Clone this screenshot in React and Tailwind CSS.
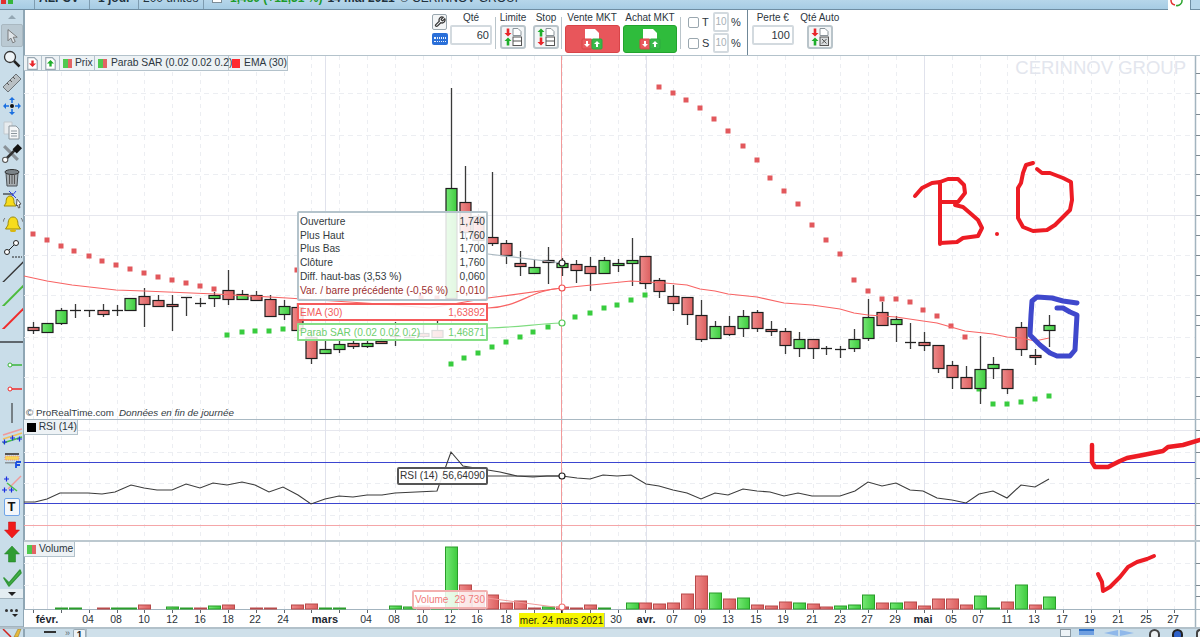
import React from "react";

const STEP = 13.92;
const xOf = (i) => 33 + STEP * i;
const px = (i) => Math.round(xOf(i)) + 0.5;

// i, open top, body bottom, high, low, up?
const candles = [
  [0, 327, 330, 322, 334, 0], [1, 323, 332, 323, 332, 1], [2, 310, 323, 308, 325, 1],
  [3, 310, 310, 304, 318, 2], [4, 310, 310, 310, 317, 2], [5, 310, 314, 304, 317, 0],
  [6, 310, 310, 305, 316, 2], [7, 298, 310, 298, 310, 1], [8, 296, 304, 288, 327, 0],
  [9, 300, 306, 295, 306, 0], [10, 304, 306, 295, 331, 0], [11, 297, 297, 297, 316, 2],
  [12, 303, 303, 298, 307, 2], [13, 295, 298, 292, 307, 1], [14, 290, 299, 270, 305, 0],
  [15, 294, 299, 290, 299, 1], [16, 295, 300, 291, 300, 0], [17, 299, 316, 295, 317, 0],
  [18, 306, 314, 300, 320, 1], [19, 307, 330, 303, 331, 0], [20, 337, 358, 330, 364, 0],
  [21, 349, 353, 341, 353, 1], [22, 344, 349, 341, 353, 1], [23, 343, 346, 339, 349, 0],
  [24, 343, 346, 340, 348, 1], [25, 341, 343, 338, 343, 0], [26, 336, 336, 322, 346, 2],
  [27, 337, 337, 330, 338, 2], [28, 333, 336, 325, 338, 0], [29, 330, 337, 320, 338, 0],
  [30, 188, 298, 88, 300, 1], [31, 202, 232, 166, 238, 0], [32, 216, 240, 214, 244, 0],
  [33, 237, 243, 172, 246, 0], [34, 243, 255, 240, 264, 0], [35, 263, 266, 251, 276, 0],
  [36, 267, 273, 260, 273, 1], [37, 260, 262, 247, 284, 0], [38, 263, 267, 258, 276, 1],
  [39, 264, 270, 260, 283, 0], [40, 266, 273, 257, 291, 0], [41, 260, 273, 257, 273, 1],
  [42, 263, 265, 259, 272, 1], [43, 260, 263, 238, 286, 1], [44, 256, 283, 256, 289, 0],
  [45, 280, 291, 278, 298, 0], [46, 296, 303, 285, 311, 0], [47, 297, 314, 297, 325, 0],
  [48, 315, 339, 300, 342, 0], [49, 326, 338, 321, 338, 1], [50, 326, 334, 316, 336, 0],
  [51, 316, 328, 310, 337, 1], [52, 312, 328, 310, 332, 0], [53, 329, 331, 321, 336, 0],
  [54, 331, 345, 328, 354, 0], [55, 339, 348, 332, 357, 1], [56, 339, 348, 339, 359, 0],
  [57, 348, 348, 346, 355, 2], [58, 349, 349, 346, 358, 2], [59, 339, 348, 329, 352, 1],
  [60, 317, 338, 299, 341, 1], [61, 312, 325, 302, 325, 0], [62, 319, 324, 316, 342, 1],
  [63, 342, 342, 323, 349, 2], [64, 342, 345, 332, 351, 0], [65, 345, 368, 345, 373, 0],
  [66, 365, 377, 361, 389, 0], [67, 377, 388, 366, 388, 0], [68, 369, 388, 336, 404, 1],
  [69, 364, 368, 357, 379, 1], [70, 369, 388, 369, 394, 0], [71, 327, 349, 322, 356, 0],
  [72, 355, 357, 349, 365, 0], [73, 325, 330, 315, 347, 1],
];

// i, height, up?
const volumes = [
  [2, 1, 1], [3, 1, 1], [5, 1, 0], [6, 1, 1], [7, 1, 1], [8, 4, 0], [10, 2, 1], [11, 1, 1],
  [12, 1, 0], [13, 3, 1], [14, 4, 0], [16, 1, 0], [17, 1, 0], [19, 4, 0], [20, 5, 0],
  [21, 1, 1], [22, 1, 1], [26, 3, 1], [27, 2, 1], [28, 3, 0], [29, 1, 1], [30, 62, 1],
  [31, 24, 0], [32, 18, 0], [33, 14, 0], [34, 6, 0], [35, 8, 0], [36, 1, 0], [37, 2, 1],
  [38, 2, 0], [39, 1, 0], [40, 4, 0], [41, 1, 1], [43, 6, 1], [44, 6, 0], [45, 5, 0],
  [46, 6, 0], [47, 15, 0], [48, 33, 0], [49, 16, 1], [50, 10, 0], [51, 11, 1], [52, 4, 0],
  [53, 3, 0], [54, 7, 0], [55, 6, 1], [56, 5, 0], [57, 2, 0], [58, 3, 1], [59, 4, 1],
  [60, 14, 1], [61, 6, 0], [62, 6, 1], [63, 7, 0], [64, 3, 0], [65, 10, 0], [66, 10, 0],
  [67, 4, 0], [68, 13, 1], [69, 1, 1], [70, 7, 0], [71, 24, 1], [72, 4, 0], [73, 12, 1],
];

const sarRed = [
  [33, 234], [47, 240], [61, 246], [74, 251], [89, 256], [102, 261], [116, 265], [130, 269],
  [144, 273], [158, 277], [172, 280], [186, 283], [200, 286], [214, 289], [297, 270],
  [421, 298], [437, 298], [659, 87], [673, 93], [686, 100], [700, 108], [714, 119], [728, 131],
  [743, 146], [757, 160], [770, 178], [784, 191], [798, 204], [812, 225], [826, 240],
  [840, 254], [854, 280], [868, 291], [882, 299], [896, 299], [910, 302], [923, 310],
  [937, 316], [951, 326], [965, 337],
];
const sarGreen = [
  [227, 335], [242, 332], [255, 331], [269, 331], [283, 329], [451, 364], [464, 358],
  [478, 353], [492, 347], [506, 342], [520, 337], [533, 332], [548, 327], [575, 317],
  [590, 313], [604, 308], [617, 305], [631, 300], [645, 295], [979, 389], [993, 404],
  [1007, 404], [1021, 402], [1035, 399], [1049, 396],
];

const ema =
  "24,276 47,281 72,285 116,290 144,291 215,294 287,298 380,304 430,308 488,298 562,288 631,281 665,283 687,285 700,289 715,291 728,294 757,297 784,303 812,305 840,309 854,313 868,315 896,317 923,321 937,323 965,331 993,334 1007,337 1021,338 1035,341 1049,338";
const rsi =
  "24,502 35,502 47,499 60,493 88,493 102,494 115,492 131,485 144,488 157,490 172,490 186,484 200,488 213,483 227,485 242,482 255,485 269,492 283,487 298,495 311,504 325,499 339,496 353,497 367,495 382,495 395,493 437,491 451,452 463,466 500,472 517,476 533,477 547,476 562,476 577,478 590,479 603,475 617,476 631,475 646,484 659,486 673,490 687,493 701,499 715,493 728,495 743,489 757,491 770,492 784,496 798,493 812,496 840,496 855,491 868,482 882,486 896,483 910,490 923,491 937,498 952,500 966,503 979,494 993,491 1007,498 1021,485 1035,487 1049,479";

const axisLabels = [
  ["04", 88], ["08", 116], ["10", 144], ["12", 172], ["16", 200], ["18", 228], ["22", 255], ["24", 283],
  ["04", 366], ["08", 394], ["10", 422], ["12", 450], ["16", 477], ["18", 506], ["30", 616],
  ["07", 672], ["09", 700], ["13", 728], ["15", 756], ["19", 783], ["21", 812], ["23", 840],
  ["27", 867], ["29", 895], ["05", 951], ["07", 978], ["11", 1007], ["13", 1034], ["17", 1062],
  ["19", 1090], ["21", 1118], ["25", 1146], ["27", 1173],
];
const monthLabels = [["févr.", 47], ["mars", 325], ["avr.", 646], ["mai", 923]];
const monthLines = [47, 325, 646, 924];
const gridX = Array.from({ length: 42 }, (_, k) => Math.round(33 + STEP * 2 * k) + 0.5);

const Defs = () => (
  <defs>
    <linearGradient id="barRed" x1="0" x2="1" y1="0" y2="0">
      <stop offset="0" stopColor="#ee8a8a" />
      <stop offset="1" stopColor="#dc5f5f" />
    </linearGradient>
    <linearGradient id="barGreen" x1="0" x2="1" y1="0" y2="0">
      <stop offset="0" stopColor="#74e874" />
      <stop offset="1" stopColor="#3ecb3e" />
    </linearGradient>
  </defs>
);

// every pane uses page coordinates in its viewBox
const PaneSvg = ({ top, height, children }) => (
  <svg
    className="block overflow-visible"
    width="1176"
    height={height}
    viewBox={`24 ${top} 1176 ${height}`}
  >
    <Defs />
    {children}
  </svg>
);

const Grid = ({ top, bottom, rows, solid = [], ticks = [] }) => (
  <g>
    {gridX.map((x) => (
      <line key={x} x1={x} x2={x} y1={top} y2={bottom} stroke="#eceef2" strokeDasharray="4 4" />
    ))}
    {rows.map((y) => (
      <line key={y} x1="24" x2="1195" y1={y + 0.5} y2={y + 0.5} stroke="#eceef2" strokeDasharray="5 4" />
    ))}
    {solid.map((y) => (
      <line key={y} x1="24" x2="1195" y1={y + 0.5} y2={y + 0.5} stroke="#e6e7ee" />
    ))}
    {monthLines.map((x) => (
      <line key={x} x1={x + 0.5} x2={x + 0.5} y1={top} y2={bottom} stroke="#e0e2ec" />
    ))}
    <line x1="1195.5" x2="1195.5" y1={top} y2={bottom} stroke="#a3b4bf" strokeWidth="1.5" />
    {ticks.map((y) => (
      <line key={y} x1="1196" x2="1200" y1={y + 0.5} y2={y + 0.5} stroke="#7f8a92" />
    ))}
  </g>
);

const Crosshair = ({ top, bottom }) => (
  <line x1="561.5" x2="561.5" y1={top} y2={bottom} stroke="#f29a9a" />
);

const Candle = ({ c }) => {
  const [i, t, b, hi, lo, kind] = c;
  const x = px(i);
  return (
    <g>
      <line x1={x} x2={x} y1={hi} y2={lo} stroke="#3a3a3a" strokeWidth="1.3" />
      {kind === 2 ? (
        <line x1={x - 5.5} x2={x + 5.5} y1={t + 0.5} y2={t + 0.5} stroke="#222" strokeWidth="1.3" />
      ) : (
        <rect
          x={x - 5.5}
          y={t + 0.5}
          width="11"
          height={b - t}
          fill={kind === 1 ? "url(#barGreen)" : "url(#barRed)"}
          stroke="#1d1d1d"
          strokeWidth="1.2"
        />
      )}
    </g>
  );
};

const Scribble = ({ d, color, width = 3.5 }) => (
  <path d={d} fill="none" stroke={color} strokeWidth={width} strokeLinecap="round" strokeLinejoin="round" />
);

const TwoTone = () => (
  <span className="flex h-[9px] w-[9px] shrink-0">
    <span className="w-1/2 bg-[#4fc94f]" />
    <span className="w-1/2 bg-[#e26464]" />
  </span>
);

const PricePane = () => (
  <div className="relative h-[364px] border-t border-[#b3c2cb]">
    <PaneSvg top={56} height={363}>
      <Grid
        top={56}
        bottom={419}
        rows={[93, 135, 174, 255, 295, 337, 377]}
        solid={[215]}
        ticks={[73, 93, 114, 135, 155, 174, 195, 215, 235, 255, 275, 295, 315, 325, 357, 377, 396]}
      />
      <Crosshair top={56} bottom={419} />
      {sarRed.map(([x, y]) => (
        <rect key={x} x={x - 2.5} y={y - 2.5} width="5" height="5" fill="#e2585c" />
      ))}
      {sarGreen.map(([x, y]) => (
        <rect key={x} x={x - 2.5} y={y - 2.5} width="5" height="5" fill="#38cc3e" />
      ))}
      {candles.map((c) => (
        <Candle key={c[0]} c={c} />
      ))}
      <polyline points={ema} fill="none" stroke="#f86464" strokeWidth="1.2" />
      <path d="M488 254 L562 263" fill="none" stroke="#aab8c0" strokeWidth="1.2" />
      <path d="M488 308 C520 307 530 290 562 288" fill="none" stroke="#f86464" strokeWidth="1.2" />
      <path d="M488 328 C520 327 535 324 562 323" fill="none" stroke="#7fdc80" strokeWidth="1.2" />
      <circle cx="562" cy="263" r="3" fill="#fff" stroke="#222" strokeWidth="1.2" />
      <circle cx="562" cy="288" r="3" fill="#fff" stroke="#f05050" strokeWidth="1.2" />
      <circle cx="562" cy="323" r="3" fill="#fff" stroke="#55c855" strokeWidth="1.2" />
      {/* B.O hand written */}
      <Scribble
        color="#ed1c24"
        width={4}
        d="M915 196 L922 188 L932 183 L940 182 L948 179 L958 179 L964 185 L965 193 L958 202 L942 202 M955 205 L963 207 L970 213 L978 220 L982 228 L978 236 L963 238 L957 242 L940 243 M940 182 L940 244"
      />
      <circle cx="997" cy="234" r="2" fill="#ed1c24" />
      <Scribble
        color="#ed1c24"
        width={4}
        d="M1033 163 L1026 165 L1023 173 L1021 183 L1018 188 L1018 218 L1023 227 L1033 231 L1047 230 L1055 225 L1062 218 L1070 210 L1072 200 L1071 182 L1063 178 L1050 173 L1042 173 L1037 169"
      />
      <Scribble
        color="#3f48cc"
        width={5}
        d="M1077 303 L1063 301 L1052 298 L1037 297 L1032 301 L1031 315 L1030 335 L1040 345 L1050 353 L1057 356 L1070 356 L1075 350 L1077 315 L1070 312 L1063 308 L1057 308"
      />
    </PaneSvg>

    <div className="absolute left-0 top-0 flex h-[15px] items-center whitespace-nowrap border-b border-r border-[#b3c2cb] bg-[#edf2f5] text-[10.300px] leading-none text-[#2c3640]">
      <span className="flex h-full w-[18px] items-center justify-center border-r border-[#b3c2cb]">
        <svg width="13" height="13" viewBox="0 0 11 11">
          <path d="M1.500 .5h5.500l2.500 2.500v7.500h-8z" fill="#fff" stroke="#9aa8b2" />
          <path d="M5.500 8.500l-3-3h2v-2.500h2v2.500h2z" fill="#e8262a" />
        </svg>
      </span>
      <span className="flex h-full w-[18px] items-center justify-center border-r border-[#b3c2cb]">
        <svg width="13" height="13" viewBox="0 0 11 11">
          <path d="M1.500 .5h5.500l2.500 2.500v7.500h-8z" fill="#fff" stroke="#9aa8b2" />
          <path d="M5.500 2.500l3 3h-2v2.500h-2v-2.500h-2z" fill="#1fae2b" />
        </svg>
      </span>
      <span className="flex h-full w-[35px] items-center gap-[3px] border-r border-[#b3c2cb] pl-[3px]">
        <TwoTone />
        Prix
      </span>
      <span className="flex h-full w-[134px] items-center gap-[4px] border-r border-[#b3c2cb] pl-[3px]">
        <TwoTone />
        Parab SAR (0.02 0.02 0.2)
      </span>
      <span className="flex h-full w-[58px] items-center gap-[4px] pl-[3px]">
        <span className="h-[9px] w-[9px] bg-[#ff2a2f]" />
        EMA (30)
      </span>
    </div>

    <div className="absolute right-[14px] top-0 text-[18.500px] leading-6 text-[#e3e6ee]">CERINNOV GROUP</div>

    <div className="absolute bottom-0 left-[2px] flex gap-[5px] whitespace-nowrap text-[9.800px] leading-[13px] text-[#333c44]">
      <span>© ProRealTime.com</span>
      <span className="italic">Données en fin de journée</span>
    </div>

    <div className="absolute left-[273px] top-[155px] w-[191px] whitespace-nowrap">
      <div className="rounded-[2px] border-2 border-[#b4c3cb] bg-white/85 px-[1px] py-[2px] text-[10.200px] leading-[13.700px] text-[#333a40]">
        {[
          ["Ouverture", "1,740"],
          ["Plus Haut", "1,760"],
          ["Plus Bas", "1,700"],
          ["Clôture", "1,760"],
          ["Diff. haut-bas (3,53 %)", "0,060"],
        ].map(([a, b]) => (
          <div key={a} className="flex justify-between">
            <span>{a}</span>
            <span>{b}</span>
          </div>
        ))}
        <div className="flex justify-between text-[#9c2f2f]">
          <span>Var. / barre précédente (-0,56 %)</span>
          <span>-0,010</span>
        </div>
      </div>
      <div className="mt-[2px] flex h-[18px] items-center justify-between border-2 border-[#f55a5a] bg-white/85 px-[1px] text-[10.200px] text-[#f26060]">
        <span>EMA (30)</span>
        <span>1,63892</span>
      </div>
      <div className="mt-[2px] flex h-[18px] items-center justify-between rounded-[1px] border-2 border-[#86de86] bg-white/85 px-[1px] text-[10.200px] text-[#6fce6f]">
        <span>Parab SAR (0.02 0.02 0.2)</span>
        <span>1,46871</span>
      </div>
    </div>
  </div>
);

const RsiPane = () => (
  <div className="relative h-[121px] border-t border-[#a9b9c3]">
    <PaneSvg top={420} height={120}>
      <Grid
        top={420}
        bottom={540}
        rows={[452, 483, 515]}
        solid={[430]}
        ticks={[430, 452, 478, 503, 525]}
      />
      <line x1="24" x2="1195" y1="462.5" y2="462.5" stroke="#3b45d0" />
      <line x1="24" x2="1195" y1="503.5" y2="503.5" stroke="#3b45d0" />
      <line x1="24" x2="1195" y1="525.5" y2="525.5" stroke="#f5a6a8" />
      <Crosshair top={420} bottom={540} />
      <polyline points={rsi} fill="none" stroke="#3c3c3c" strokeWidth="1.1" />
      <line x1="487" x2="562" y1="476" y2="476" stroke="#3c3c3c" />
      <circle cx="562" cy="476" r="3" fill="#fff" stroke="#222" strokeWidth="1.2" />
      <Scribble
        color="#ed1c24"
        width={4.5}
        d="M1092 445 L1092 462 L1095 467 L1108 467 L1120 461 L1127 458 L1143 455 L1163 451 L1168 447 L1183 445 L1200 440"
      />
    </PaneSvg>
    <div className="absolute left-0 top-0 flex h-[15px] w-[54px] items-center gap-[3px] whitespace-nowrap border-b border-r border-[#b3c2cb] bg-[#edf2f5] pl-[3px] text-[10.300px] text-[#2c3640]">
      <span className="h-[9px] w-[9px] bg-black" />
      RSI (14)
    </div>
    <div className="absolute left-[373px] top-[47px] flex h-[18px] w-[91px] items-center justify-between whitespace-nowrap rounded-[2px] border-2 border-[#555] bg-white/90 px-[1px] text-[10.200px] text-[#333]">
      <span>RSI (14)</span>
      <span>56,64090</span>
    </div>
  </div>
);

const VolumePane = () => (
  <div className="relative h-[69px] border-t-2 border-[#bcc8cf]">
    <PaneSvg top={542} height={67}>
      <Grid top={542} bottom={609} rows={[563, 585]} ticks={[563, 585, 596]} />
      <Crosshair top={542} bottom={609} />
      {volumes.map(([i, h, up]) => (
        <rect
          key={i}
          x={px(i) - 6}
          y={609 - h}
          width="12"
          height={h}
          fill={up ? "url(#barGreen)" : "url(#barRed)"}
          stroke={up ? "#2a9c2a" : "#b74a4a"}
          strokeWidth="1"
        />
      ))}
      <line x1="487" x2="562" y1="598" y2="608" stroke="#f09a9a" />
      <circle cx="562" cy="607" r="3" fill="#fff" stroke="#f07070" strokeWidth="1.2" />
      <Scribble
        color="#ed1c24"
        width={4}
        d="M1098 574 L1102 582 L1103 591 L1110 587 L1120 577 L1128 567 L1137 562 L1147 559 L1154 556"
      />
    </PaneSvg>
    <div className="absolute left-0 top-0 flex h-[15px] w-[51px] items-center gap-[3px] whitespace-nowrap border-b border-r border-[#b3c2cb] bg-[#edf2f5] pl-[3px] text-[10.300px] text-[#2c3640]">
      <TwoTone />
      Volume
    </div>
    <div className="absolute left-[388px] top-[48px] flex h-[19px] w-[76px] items-center justify-between whitespace-nowrap rounded-[2px] border-2 border-[#f2b0b0] bg-white/85 px-[1px] text-[10px] text-[#f07a7a]">
      <span>Volume</span>
      <span>29 730</span>
    </div>
  </div>
);

const AxisPane = () => (
  <div className="h-[18px] border-t border-[#a3b4bf] bg-white">
    <svg className="block" width="1176" height="17" viewBox="24 610 1176 17" fontFamily="'Liberation Sans', sans-serif">
      {gridX.map((x) => (
        <line key={x} x1={x} x2={x} y1="610" y2="613" stroke="#5e666c" />
      ))}
      {axisLabels.map(([t, x]) => (
        <text key={x} x={x} y="623" textAnchor="middle" fontSize="10.5" fill="#2a3238">
          {t}
        </text>
      ))}
      {monthLabels.map(([t, x]) => (
        <text key={x} x={x} y="623" textAnchor="middle" fontSize="11" fontWeight="700" fill="#1d2730">
          {t}
        </text>
      ))}
      <rect x="519" y="613" width="85" height="14" fill="#f6f600" />
      <line x1="604.5" x2="604.5" y1="613" y2="627" stroke="#aab8c0" />
      <text x="561.5" y="624" textAnchor="middle" fontSize="10" fill="#2a2a10">
        mer. 24 mars 2021
      </text>
      <line x1="561.5" x2="561.5" y1="610" y2="613" stroke="#222" />
      <line x1="1195.5" x2="1195.5" y1="610" y2="627" stroke="#a3b4bf" strokeWidth="1.5" />
    </svg>
  </div>
);

const GrayBtn = ({ children }) => (
  <div className="flex h-[24px] w-[26px] items-center justify-center rounded-[3px] border-2 border-[#b9c4ca] bg-[#f4f6f7]">
    {children}
  </div>
);

const OrderIcon = ({ swap, cancel }) => (
  <svg width="20" height="20" viewBox="0 0 20 20">
    <path d="M10 1.500h5l3 3v4h-8z" fill="#fff" stroke="#8a949a" />
    <rect x="10" y="10" width="8.500" height="8.500" fill={cancel ? "#d8dcde" : "#fff"} stroke="#555" />
    {cancel ? (
      <path d="M12 12l4.500 4.500M16.500 12l-4.500 4.500" stroke="#555" />
    ) : (
      <line x1="10" x2="18.500" y1="14" y2="14" stroke="#555" />
    )}
    <path d="M5 9.500l-3.500-3.500h2.200v-4.500h2.600v4.500h2.200z" fill={swap ? "#1fae2b" : "#e8262a"} transform={swap ? "rotate(180 5 5.500)" : undefined} />
    <path d="M5 10.500l3.500 3.500h-2.200v4.500h-2.600v-4.500h-2.200z" fill={swap ? "#e8262a" : "#1fae2b"} transform={swap ? "rotate(180 5 14.500)" : undefined} />
  </svg>
);

const MarketIcon = () => (
  <svg width="22" height="22" viewBox="0 0 22 22">
    <path d="M4 1h10l4 4v8h-14z" fill="#fff" />
    <rect x="1" y="11" width="10" height="10" rx="1" fill="#ea5a5f" stroke="#d84448" />
    <rect x="11" y="11" width="10" height="10" rx="1" fill="#39b84a" stroke="#2ea93f" />
    <path d="M6 19l-3-3h2v-3h2v3h2z" fill="#fff" />
    <path d="M16 13l3 3h-2v3h-2v-3h-2z" fill="#fff" />
  </svg>
);

const Toolbar = () => (
  <div className="flex h-[45px] items-start pl-[407px] text-[10px] leading-none text-[#2c3640]">
    <div className="mt-[4px] flex w-[17px] flex-col items-center gap-[3px]">
      <div className="flex h-[16px] w-[15px] items-center justify-center rounded-[2px] border border-[#9aa7af] bg-[#f3f5f6]">
        <svg width="12" height="12" viewBox="0 0 24 24" fill="none" stroke="#333" strokeWidth="2.500">
          <path d="M14.700 6.300a1 1 0 0 0 0 1.400l1.600 1.600a1 1 0 0 0 1.400 0l3.800-3.800a6 6 0 0 1-7.900 7.900l-6.900 6.900a2.100 2.100 0 0 1-3-3l6.900-6.900a6 6 0 0 1 7.900-7.900z" />
        </svg>
      </div>
      <div className="flex h-[12px] w-[16px] flex-col justify-center gap-[1px] rounded-[2px] bg-[#2a6fd8] px-[2px]">
        <span className="h-[2px] border-y border-dotted border-white/90" />
        <span className="h-[2px] border-b border-dotted border-white/90" />
      </div>
    </div>
    <div className="ml-[1px] mt-[3px] flex w-[44px] flex-col items-center gap-[1px]">
      <span className="h-[11px]">Qté</span>
      <div className="flex h-[20px] w-[42px] items-center justify-end rounded-[2px] border-2 border-[#d3dadf] bg-white pr-[1px] text-[11px]">60</div>
    </div>
    <div className="ml-[2px] mt-[7px] h-[32px] w-[1px] bg-[#b9c4ca]" />
    <div className="ml-[2px] mt-[3px] flex w-[30px] flex-col items-center gap-[1px]">
      <span className="h-[11px]">Limite</span>
      <GrayBtn><OrderIcon /></GrayBtn>
    </div>
    <div className="ml-[3px] mt-[3px] flex w-[30px] flex-col items-center gap-[1px]">
      <span className="h-[11px]">Stop</span>
      <GrayBtn><OrderIcon swap /></GrayBtn>
    </div>
    <div className="mt-[7px] h-[32px] w-[1px] bg-[#b9c4ca]" />
    <div className="ml-[2px] mt-[3px] flex w-[56px] flex-col items-center gap-[1px]">
      <span className="h-[11px] whitespace-nowrap">Vente MKT</span>
      <div className="flex h-[28px] w-[55px] items-center justify-center rounded-[3px] border border-[#d84448] bg-[#e8565b]"><MarketIcon /></div>
    </div>
    <div className="ml-[2px] mt-[3px] flex w-[56px] flex-col items-center gap-[1px]">
      <span className="h-[11px] whitespace-nowrap">Achat MKT</span>
      <div className="flex h-[28px] w-[54px] items-center justify-center rounded-[3px] border border-[#22a32e] bg-[#2fbc3c]"><MarketIcon /></div>
    </div>
    <div className="ml-[2px] mt-[7px] h-[32px] w-[1px] bg-[#b9c4ca]" />
    <div className="ml-[7px] mt-[2px] flex flex-col gap-[1px]">
      {["T", "S"].map((l) => (
        <div key={l} className="flex h-[20px] items-center">
          <span className="h-[11px] w-[11px] rounded-[2px] border border-[#9aa7af] bg-white" />
          <span className="ml-[3px] w-[11px] text-[11px]">{l}</span>
          <span className="flex h-[20px] w-[16px] items-center justify-center rounded-[2px] border-2 border-[#d3dadf] text-[10px] text-[#a8b0b6]">10</span>
          <span className="ml-[2px] text-[11px]">%</span>
        </div>
      ))}
    </div>
    <div className="ml-[6px] h-full w-[1px] bg-[#6f8797]" />
    <div className="ml-[4px] mt-[3px] flex w-[42px] flex-col items-center gap-[1px]">
      <span className="h-[11px] whitespace-nowrap">Perte €</span>
      <div className="flex h-[20px] w-[42px] items-center justify-end rounded-[2px] border-2 border-[#d3dadf] bg-white pr-[2px] text-[11px]">100</div>
    </div>
    <div className="ml-[8px] mt-[3px] flex w-[36px] flex-col items-center gap-[1px]">
      <span className="h-[11px] whitespace-nowrap">Qté Auto</span>
      <GrayBtn><OrderIcon cancel /></GrayBtn>
    </div>
  </div>
);

const SideIcon = ({ children }) => (
  <div className="flex h-[23.550px] w-full items-center justify-center">{children}</div>
);

const Ic = ({ children, w = 20, h = 20 }) => (
  <svg width={w} height={h} viewBox="0 0 20 20">
    {children}
  </svg>
);

const Sidebar = () => (
  <div className="flex w-[25px] shrink-0 flex-col border-r-2 border-[#8fa6b4] bg-[#c9dde9]">
    <div className="flex h-[14px] items-center justify-center">
      <span className="h-0 w-0 border-x-[4px] border-b-[4px] border-x-transparent border-b-[#94a7b3]" />
    </div>
    <SideIcon>
      <div className="flex h-[23px] w-[22px] items-center justify-center rounded-[2px] border border-[#a9b8c1] bg-[#bac9d2]">
        <Ic w={16} h={18}>
          <path d="M5 2v14l3.500-3.500 2.500 6 3-1.500-2.500-5.500h5z" fill="#dfe5e9" stroke="#666" />
        </Ic>
      </div>
    </SideIcon>
    <SideIcon>
      <Ic>
        <circle cx="8" cy="8" r="5.500" fill="#eef4f7" stroke="#333" strokeWidth="1.300" />
        <line x1="12" y1="12" x2="17.500" y2="17.500" stroke="#222" strokeWidth="2.500" />
      </Ic>
    </SideIcon>
    <SideIcon>
      <Ic>
        <path d="M1 14L14 1l5 5L6 19z" fill="#b9c0c4" stroke="#6c7479" />
        <path d="M5 10l2 2M8 7l2 2M11 4l2 2" stroke="#555" />
      </Ic>
    </SideIcon>
    <SideIcon>
      <Ic>
        <circle cx="10" cy="10" r="2" fill="#111" />
        <path d="M10 1l3 3h-6zM10 19l3-3h-6zM1 10l3-3v6zM19 10l-3-3v6z" fill="#1a6fe0" />
        <path d="M10 4v3M10 13v3M4 10h3M13 10h3" stroke="#1a6fe0" strokeWidth="1.500" />
      </Ic>
    </SideIcon>
    <SideIcon>
      <Ic>
        <path d="M2 2h8v12h-8z" fill="#e8ecef" stroke="#c2c9ce" />
        <path d="M7 6h7l3 3v10h-10z" fill="#f5f7f8" stroke="#8c969d" />
        <path d="M9 11h6M9 13.500h6M9 16h6" stroke="#8c969d" />
      </Ic>
    </SideIcon>
    <SideIcon>
      <Ic w={21} h={21}>
        <path d="M3 3l13 13" stroke="#8a9298" strokeWidth="3" />
        <path d="M17 3L5 15" stroke="#333" strokeWidth="2.500" />
        <path d="M11 6l5-5 4 4-5 5z" fill="#111" />
        <circle cx="4" cy="16" r="2.500" fill="#fff" stroke="#555" />
      </Ic>
    </SideIcon>
    <SideIcon>
      <Ic>
        <path d="M4 6h12l-1 13H5z" fill="#a7adb1" stroke="#4c5358" />
        <path d="M7.500 8v9M10 8v9M12.500 8v9" stroke="#555" />
        <ellipse cx="10" cy="5" rx="7" ry="2.500" fill="#7c8489" stroke="#333" />
      </Ic>
    </SideIcon>
    <SideIcon>
      <Ic w={22} h={20}>
        <path d="M1 3h10" stroke="#111" />
        <path d="M7 0l7 7M14 0l-5 6" stroke="#2a3fe0" />
        <path d="M8 5c3 0 4 3 4 7l2 3H2l2-3c0-4 1-7 4-7z" fill="#f7dc1c" stroke="#9a8a10" />
        <path d="M15 8l4 5-2 .5 1 3-1.500 .5-1-3-1 1z" fill="#fff" stroke="#555" />
      </Ic>
    </SideIcon>
    <SideIcon>
      <Ic w={22} h={20}>
        <path d="M11 3c4 0 5 4 5 8l2.500 4h-15l2.500-4c0-4 1-8 5-8z" fill="#f7dc1c" stroke="#9a8a10" />
        <ellipse cx="11" cy="16.500" rx="3" ry="1.500" fill="#d9b70f" />
        <path d="M3 4c-1 1-1.500 2-1.500 3.500M19 4c1 1 1.500 2 1.500 3.500" stroke="#666" fill="none" />
      </Ic>
    </SideIcon>
    <SideIcon>
      <Ic>
        <circle cx="5" cy="14" r="2.500" fill="#fff" stroke="#222" />
        <circle cx="14" cy="5" r="2.500" fill="#fff" stroke="#222" />
        <line x1="7" y1="12" x2="12" y2="7" stroke="#222" />
        <line x1="10" y1="19" x2="20" y2="19" stroke="#222" strokeDasharray="2 1" />
      </Ic>
    </SideIcon>
    <SideIcon><Ic w={22} h={22}><line x1="1" y1="21" x2="21" y2="1" stroke="#333" strokeWidth="1.200" /></Ic></SideIcon>
    <SideIcon><Ic w={22} h={22}><line x1="1" y1="21" x2="21" y2="1" stroke="#4cbb3c" strokeWidth="1.800" /></Ic></SideIcon>
    <SideIcon><Ic w={22} h={22}><line x1="1" y1="21" x2="21" y2="1" stroke="#f02a2a" strokeWidth="1.800" /></Ic></SideIcon>
    <SideIcon><span className="h-[2px] w-full bg-[#5f676d]" /></SideIcon>
    <SideIcon>
      <Ic>
        <line x1="8" x2="20" y1="10" y2="10" stroke="#3ab53a" strokeWidth="1.500" />
        <circle cx="8" cy="10" r="2" fill="#fff" stroke="#3ab53a" />
      </Ic>
    </SideIcon>
    <SideIcon>
      <Ic>
        <line x1="8" x2="20" y1="10" y2="10" stroke="#f02a2a" strokeWidth="1.500" />
        <circle cx="8" cy="10" r="2" fill="#fff" stroke="#f02a2a" />
      </Ic>
    </SideIcon>
    <SideIcon><Ic><line x1="10" x2="10" y1="0" y2="20" stroke="#222" /></Ic></SideIcon>
    <SideIcon>
      <Ic w={22} h={20}>
        <path d="M1 9L20 3" stroke="#f09a9a" strokeWidth="1.500" />
        <path d="M1 13L20 7" stroke="#f3c05a" strokeWidth="1.500" />
        <path d="M1 17L20 11" stroke="#49bf49" strokeWidth="1.500" />
        <path d="M0 16h5M2.500 13.500v5M8 12h5M10.500 9.500v5M15 13h5M17.500 10.500v5" stroke="#1a2ee0" strokeWidth="1.200" />
      </Ic>
    </SideIcon>
    <SideIcon>
      <Ic>
        <rect x="3" y="3" width="14" height="2" fill="#555" />
        <rect x="3" y="6" width="14" height="4" fill="#f7d65a" stroke="#e89090" strokeDasharray="1 1" />
        <rect x="3" y="12" width="10" height="1.500" fill="#8a949a" />
        <path d="M14 12h5M14 12v6M14 15h4" stroke="#1a4ee0" strokeWidth="1.800" fill="none" />
      </Ic>
    </SideIcon>
    <SideIcon>
      <Ic w={22} h={20}>
        <path d="M6 16L19 3" stroke="#f09a9a" strokeWidth="1.500" />
        <path d="M5 10l10 8" stroke="#49bf49" strokeWidth="1.500" />
        <path d="M2 6h5M4.500 3.500v5M0 17h5M2.500 14.500v5M7 17h5M9.500 14.500v5" stroke="#1a2ee0" strokeWidth="1.200" />
      </Ic>
    </SideIcon>
    <SideIcon>
      <div className="flex h-[18px] w-[16px] items-center justify-center rounded-[2px] border border-[#6fa5e8] bg-[#f3f7fb] text-[13px] font-bold leading-none text-[#111]">T</div>
    </SideIcon>
    <SideIcon><Ic><path d="M10 18L2.500 10H6.500V2h7v8H17.500z" fill="#f01a1a" stroke="#c01010" strokeWidth=".5" /></Ic></SideIcon>
    <SideIcon><Ic><path d="M10 2L17.500 10H13.500v8h-7v-8H2.500z" fill="#2f9c32" stroke="#1f7c22" strokeWidth=".5" /></Ic></SideIcon>
    <SideIcon><Ic w={20} h={20}><path d="M2 11l5 5L18 3l1 3L7 19z" fill="#49b84a" stroke="#33983a" strokeWidth="1.500" strokeLinejoin="round" /></Ic></SideIcon>
    <div className="flex h-[9px] items-center justify-center bg-[#e4edf2]">
      <span className="h-0 w-0 border-x-[4px] border-t-[4px] border-x-transparent border-t-[#222]" />
    </div>
    <div className="flex flex-1 flex-col items-center justify-center gap-[2px] border-y border-[#a3b4bf]">
      <span className="flex gap-[2px]">
        <span className="h-[3px] w-[3px] rounded-full bg-[#333]" />
        <span className="h-[3px] w-[3px] rounded-full bg-[#333]" />
        <span className="h-[3px] w-[3px] rounded-full bg-[#333]" />
      </span>
      <span className="ml-[6px] h-0 w-0 border-x-[3px] border-t-[3px] border-x-transparent border-t-[#222]" />
    </div>
  </div>
);

// the strip is scrolled off: only the lower half of its text shows
const TopCell = ({ w, children }) => (
  <div className={`h-full overflow-hidden border-r border-[#7e9cb0] ${w}`}>
    <div className="mt-[-8px] whitespace-nowrap">{children}</div>
  </div>
);

const TopBar = () => (
  <div className="flex h-[10px] font-bold">
    <div className="flex flex-1 border-b border-[#6f8ea3] bg-gradient-to-b from-[#b6d6ea] to-[#a6cce4] text-[12px] leading-[12px] text-[#20313c]">
      <div className="flex w-[35px] items-start gap-[2px] overflow-hidden border-r border-[#7e9cb0] pl-[1px]">
        <span className="mt-[-4px] h-[8px] w-[5px] bg-[#e3302f]" />
        <span className="mt-[-4px] h-[8px] w-[5px] bg-[#35b63c]" />
      </div>
      <TopCell w="w-[55px] pl-[4px]">ALFCV</TopCell>
      <TopCell w="w-[49px] pl-[8px]">1 jour</TopCell>
      <TopCell w="w-[65px] pl-[4px] font-normal">200 unités</TopCell>
      <div className="ml-[8px] mt-[-2px] h-[5px] w-[10px] border border-[#7e8e98] bg-white" />
      <div className="mt-[-8px] flex gap-[5px] whitespace-nowrap pl-[8px]">
        <span className="text-[#1c9b2c]">1,480 (+12,31 %)</span>
        <span>14 mai 2021</span>
        <span className="font-normal">© CERINNOV GROUP</span>
      </div>
    </div>
    <div className="w-[22px] overflow-hidden">
      <svg width="22" height="10" viewBox="0 0 22 10">
        <path d="M3 0a5 5 0 0 0 4 5" stroke="#e3302f" fill="none" strokeWidth="1.500" />
        <path d="M14 0a5 5 0 0 1-6 5.500" stroke="#2da52f" fill="none" strokeWidth="1.500" />
      </svg>
    </div>
    <div className="w-[10px] border-b border-l border-[#6f8ea3] bg-[#b6d6ea]" />
  </div>
);

const BottomBar = () => (
  <div className="flex h-[10px] overflow-hidden border-t-2 border-[#b2c1ca] bg-[#c9dde9]">
    <div className="w-[25px] border-r-2 border-[#8fa6b4]">
      <svg width="24" height="8" viewBox="0 0 24 8">
        <path d="M3 0l8 8" stroke="#d0241f" strokeWidth="1.500" />
        <path d="M14 8l4-8h3l-3 8z" fill="#e6b93c" stroke="#8a7525" strokeWidth=".5" />
      </svg>
    </div>
    <div className="ml-[19px] mt-[2px] h-[2px] w-[12px] bg-[#333]" />
    <span className="ml-[9px] text-[9px] leading-[9px] text-[#5d6a72]">»</span>
    <div className="ml-[3px] h-full w-[13px] rounded-t-[2px] border border-b-0 border-[#9aabb6] bg-[#edf3f7] text-center text-[10px] font-bold leading-[12px] text-[#222]">1</div>
    <div className="flex-1 border-l border-[#aebdc6] bg-[#cfe0ea]" />
    <div className="flex items-start">
      <span className="h-full w-[11px] border border-[#8a99a3] bg-[#edf3f7]" />
      <span className="ml-[8px] h-[6px] w-[15px] border-t-2 border-[#2d6fc7] bg-[#6f9fe0]" />
      <span className="ml-[10px] mt-[1px] h-0 w-0 border-y-[3px] border-r-[14px] border-y-transparent border-r-[#8fb8ea]" />
      <span className="ml-[2px] mt-[1px] h-0 w-0 border-y-[3px] border-l-[14px] border-y-transparent border-l-[#8fb8ea]" />
      <span className="ml-[15px] h-[12px] w-[11px] rounded-full border-2 border-[#444] bg-[#eef2f4]" />
      <span className="ml-[12px] h-[12px] w-[11px] rounded-full border-2 border-[#222] bg-[#2f62c9]" />
      <span className="ml-[13px] h-[12px] w-[4px] rounded-l-full border-2 border-r-0 border-[#444] bg-[#eef2f4]" />
    </div>
  </div>
);

const App = () => (
  <div className="flex h-[637px] w-[1200px] flex-col overflow-hidden bg-white font-['Liberation_Sans',sans-serif]">
    <TopBar />
    <div className="flex h-[617px]">
      <Sidebar />
      <div className="ml-[-1px] flex w-[1176px] flex-col">
        <Toolbar />
        <PricePane />
        <RsiPane />
        <VolumePane />
        <AxisPane />
      </div>
    </div>
    <BottomBar />
  </div>
);

export default App;
